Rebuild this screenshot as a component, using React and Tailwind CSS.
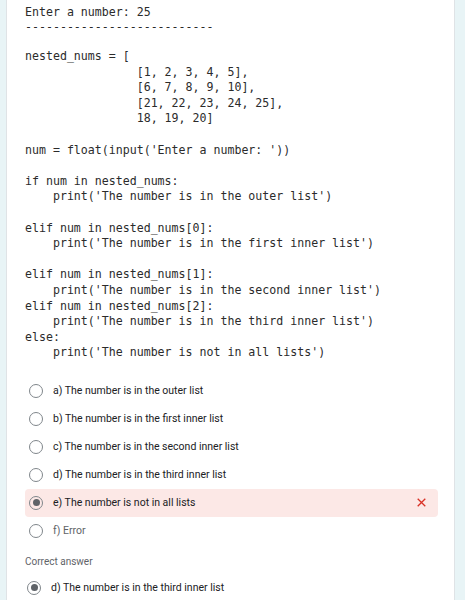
import React from 'react';

const code = `nested_nums = [
                [1, 2, 3, 4, 5],
                [6, 7, 8, 9, 10],
                [21, 22, 23, 24, 25],
                18, 19, 20]

num = float(input('Enter a number: '))

if num in nested_nums:
    print('The number is in the outer list')

elif num in nested_nums[0]:
    print('The number is in the first inner list')

elif num in nested_nums[1]:
    print('The number is in the second inner list')
elif num in nested_nums[2]:
    print('The number is in the third inner list')
else:
    print('The number is not in all lists')`;

const options = [
  'a) The number is in the outer list',
  'b) The number is in the first inner list',
  'c) The number is in the second inner list',
  'd) The number is in the third inner list',
  'e) The number is not in all lists',
  'f) Error',
];

const Radio = ({ checked }) => (
  <span className="flex h-[14px] w-[14px] shrink-0 items-center justify-center rounded-full border-[1.5px] border-[#80868b]">
    {checked && <span className="h-[7px] w-[7px] rounded-full bg-[#5f6368]" />}
  </span>
);

export default function App() {
  return (
    <div className="min-h-[600px] bg-[#e8f4f6] pl-[6px] pr-[10px]">
      <div className="min-h-[600px] border-x border-[#dfe3e6] bg-white pl-[18px] pr-[16px]">
        {/* program output + code */}
        <pre
          className="pt-[5px] text-[11.6px] leading-[15px] text-[#2b2b2b]"
          style={{ fontFamily: '"DejaVu Sans Mono", monospace' }}
        >
          {'Enter a number: 25\n---------------------------'}
        </pre>
        <pre
          className="mt-[14px] text-[11.6px] leading-[15.6px] text-[#2b2b2b]"
          style={{ fontFamily: '"DejaVu Sans Mono", monospace' }}
        >
          {code}
        </pre>

        {/* answers */}
        <div className="mt-[16px] flex flex-col" style={{ fontFamily: 'Roboto, sans-serif' }}>
          {options.map((opt, i) => {
            const wrong = i === 4;
            return (
              <div
                key={opt}
                className={
                  'flex h-[28px] items-center rounded-[4px] pl-[4px] pr-[10px] ' +
                  (wrong ? 'bg-[#fce8e6]' : '')
                }
              >
                <Radio checked={wrong} />
                <span className={'ml-[10px] text-[10.5px] ' + (i === 5 ? 'text-[#5f6368]' : 'text-[#202124]')}>
                  {opt}
                </span>
                {wrong && (
                  <svg className="ml-auto" width="13" height="13" viewBox="0 0 24 24">
                    <path d="M5 5 L19 19 M19 5 L5 19" stroke="#d93025" strokeWidth="2.4" fill="none" />
                  </svg>
                )}
              </div>
            );
          })}
          <div className="mt-[9px] text-[10px] text-[#5f6368]">Correct answer</div>
          <div className="mt-[11px] flex items-center pl-[2px]">
            <Radio checked />
            <span className="ml-[10px] text-[10.5px] text-[#202124]">d) The number is in the third inner list</span>
          </div>
        </div>
      </div>
    </div>
  );
}
